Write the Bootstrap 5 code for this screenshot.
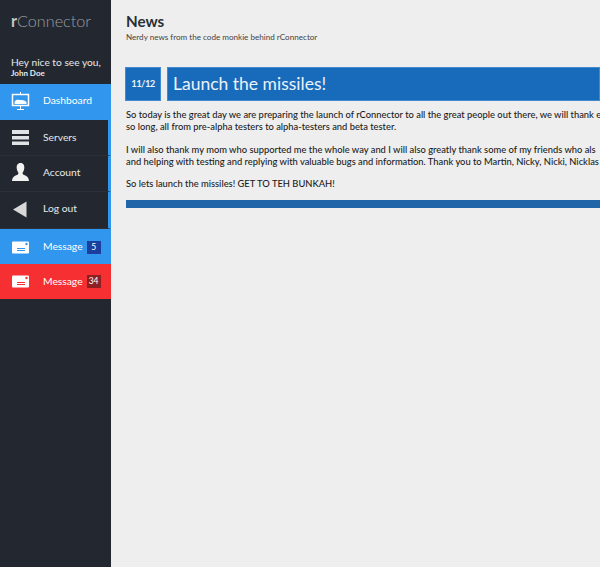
<!DOCTYPE html>
<html lang="en">
<head>
    <meta charset="UTF-8">
    <meta name="viewport" content="width=device-width, initial-scale=1.0">
    <title>rConnector</title>
    <link rel="stylesheet" href="https://cdn.jsdelivr.net/npm/bootstrap@5.3.0/dist/css/bootstrap.min.css">
    <style>
        html, body {
            height: 100%;
            overflow: hidden;
        }
        body {
            background: #eeeeee;
            font-family: Lato, "Liberation Sans", sans-serif;
            color: #222;
        }
        .app-shell {
            height: 567px;
        }
        .side {
            width: 111px;
            background: #232830;
            flex: none;
        }
        .brand {
            height: 44px;
            padding: 10px 0 0 11px;
            font-size: 16.2px;
            font-weight: 300;
            color: #9a9da1;
            line-height: 21px;
        }
        .brand b {
            color: #c4c6c8;
            font-weight: 700;
        }
        .hello {
            height: 40px;
            padding: 12px 0 0 11px;
            font-size: 10.2px;
            line-height: 12px;
            color: #e8e8e8;
            white-space: nowrap;
        }
        .hello strong {
            display: block;
            font-size: 8px;
            line-height: 10px;
        }
        .side-item {
            height: 36px;
            display: flex;
            align-items: center;
            font-size: 10.3px;
            color: #e6e8ea;
            text-decoration: none;
            padding-left: 11px;
            background: #232830;
        }
        .side-item svg {
            width: 19px;
            height: 19px;
            margin-right: 13px;
            flex: none;
        }
        .side-sub {
            border-right: 3px solid #3096ee;
            border-bottom: 1px solid #2b313a;
        }
        .side-last {
            height: 37px;
        }
        .side-blue {
            background: #3096ee;
            color: #fff;
        }
        .side-msg {
            height: 35px;
        }
        .side-red {
            background: #f52f32;
            color: #fff;
        }
        .nudge-up {
            padding-bottom: 2px;
        }
        .nudge-down {
            padding-top: 1px;
        }
        .count {
            font-size: 8.5px;
            line-height: 13px;
            height: 13px;
            width: 14px;
            margin-left: 4px;
            text-align: center;
        }
        .count-blue {
            background: #1b3f9c;
        }
        .count-red {
            background: #8e1f22;
        }
        .main-col {
            padding: 11px 0 0 15px;
            min-width: 0;
        }
        .page-title {
            font-size: 15.2px;
            font-weight: 700;
            line-height: 20px;
            margin: 0;
            color: #2a2e34;
        }
        .page-sub {
            font-size: 8.1px;
            line-height: 11px;
            margin: 1px 0 0;
            color: #444;
        }
        .post-head {
            margin: 24px 0 0 -1px;
            gap: 6px;
        }
        .post-date, .post-title {
            background: #186bba;
            border: 1px solid #3f8ad0;
            color: #eaf2fa;
            height: 34px;
        }
        .post-date {
            width: 36px;
            flex: none;
            font-size: 9.5px;
            font-weight: 700;
            letter-spacing: -.6px;
            line-height: 32px;
            text-align: center;
        }
        .post-title {
            flex: 1;
            font-size: 17.5px;
            font-weight: 400;
            line-height: 31px;
            padding-left: 5px;
            margin: 0;
        }
        .post-body {
            margin-top: 8px;
            font-size: 9.35px;
            font-weight: 500;
            line-height: 12px;
            color: #1c1c1c;
            white-space: nowrap;
            overflow: hidden;
        }
        .post-body p {
            margin: 0 0 11px;
        }
        .post-body p + p {
            margin-bottom: 10px;
        }
        .post-foot {
            height: 8px;
            background: #1f65a8;
        }
    </style>
</head>
<body>
    <div class="app-shell d-flex">
        <div class="side">
            <div class="brand"><b>r</b>Connector</div>
            <div class="hello">Hey nice to see you,<strong>John Doe</strong></div>
            <a href="#" class="side-item side-blue nudge-up">
                <svg viewBox="0 0 19 19"><path d="M9 0h1v2H9z" fill="#fff"/><rect x="1.500" y="2.500" width="16" height="11" fill="none" stroke="#fff" stroke-width="1.500"/><path d="M3.500 10c2-3 3-2 5-2s5 0 7 2v2h-12z" fill="#fff"/><path d="M9 14h1v3H9zM6 17h7v1H6z" fill="#fff"/></svg>
                Dashboard
            </a>
            <a href="#" class="side-item side-sub">
                <svg viewBox="0 0 19 19"><path d="M1 2h17v4H1zM1 8h17v3.500H1zM1 13.500h17V17H1z" fill="#dfe3e6"/></svg>
                Servers
            </a>
            <a href="#" class="side-item side-sub nudge-up">
                <svg viewBox="0 0 19 19"><path d="M9.500 0c3 0 4 2.500 3.800 5-.2 2-1 3.500-1.600 4.500-.3 1 0 2 1.300 2.500 2.500 1 4.500 1.500 5 6H1c.5-4.500 2.500-5 5-6 1.300-.5 1.600-1.500 1.300-2.500C6.700 8.500 5.900 7 5.700 5 5.500 2.500 6.500 0 9.500 0z" fill="#f2f2f2"/></svg>
                Account
            </a>
            <a href="#" class="side-item side-sub side-last nudge-up">
                <svg viewBox="0 0 19 19"><path d="M15.500 1.500v16L2 9.500z" fill="#d8d8d8"/></svg>
                Log out
            </a>
            <a href="#" class="side-item side-blue side-msg nudge-down">
                <svg viewBox="0 0 19 19"><rect x="1" y="3.500" width="17" height="12" rx="1" fill="#fff"/><path d="M6 10h8v1H6zM6 12h8v1H6z" fill="#3096ee"/><circle cx="15.500" cy="6" r="1.200" fill="#3096ee"/></svg>
                Message <span class="count count-blue">5</span>
            </a>
            <a href="#" class="side-item side-red side-msg">
                <svg viewBox="0 0 19 19"><rect x="1" y="3.500" width="17" height="12" rx="1" fill="#fff"/><path d="M6 10h8v1H6zM6 12h8v1H6z" fill="#f52f32"/><circle cx="15.500" cy="6" r="1.200" fill="#f52f32"/></svg>
                Message <span class="count count-red">34</span>
            </a>
        </div>
        <div class="main-col flex-grow-1">
            <h1 class="page-title">News</h1>
            <p class="page-sub">Nerdy news from the code monkie behind rConnector</p>
            <div class="post-head d-flex">
                <div class="post-date">11/12</div>
                <h2 class="post-title">Launch the missiles!</h2>
            </div>
            <div class="post-body">
                <p>So today is the great day we are preparing the launch of rConnector to all the great people out there, we will thank e<br>so long, all from pre-alpha testers to alpha-testers and beta tester.</p>
                <p>I will also thank my mom who supported me the whole way and I will also greatly thank some of my friends who als<br>and helping with testing and replying with valuable bugs and information. Thank you to Martin, Nicky, Nicki, Nicklas</p>
                <p>So lets launch the missiles! GET TO TEH BUNKAH!</p>
            </div>
            <div class="post-foot"></div>
        </div>
    </div>
    <script src="https://cdn.jsdelivr.net/npm/bootstrap@5.3.0/dist/js/bootstrap.bundle.min.js"></script>
</body>
</html>
